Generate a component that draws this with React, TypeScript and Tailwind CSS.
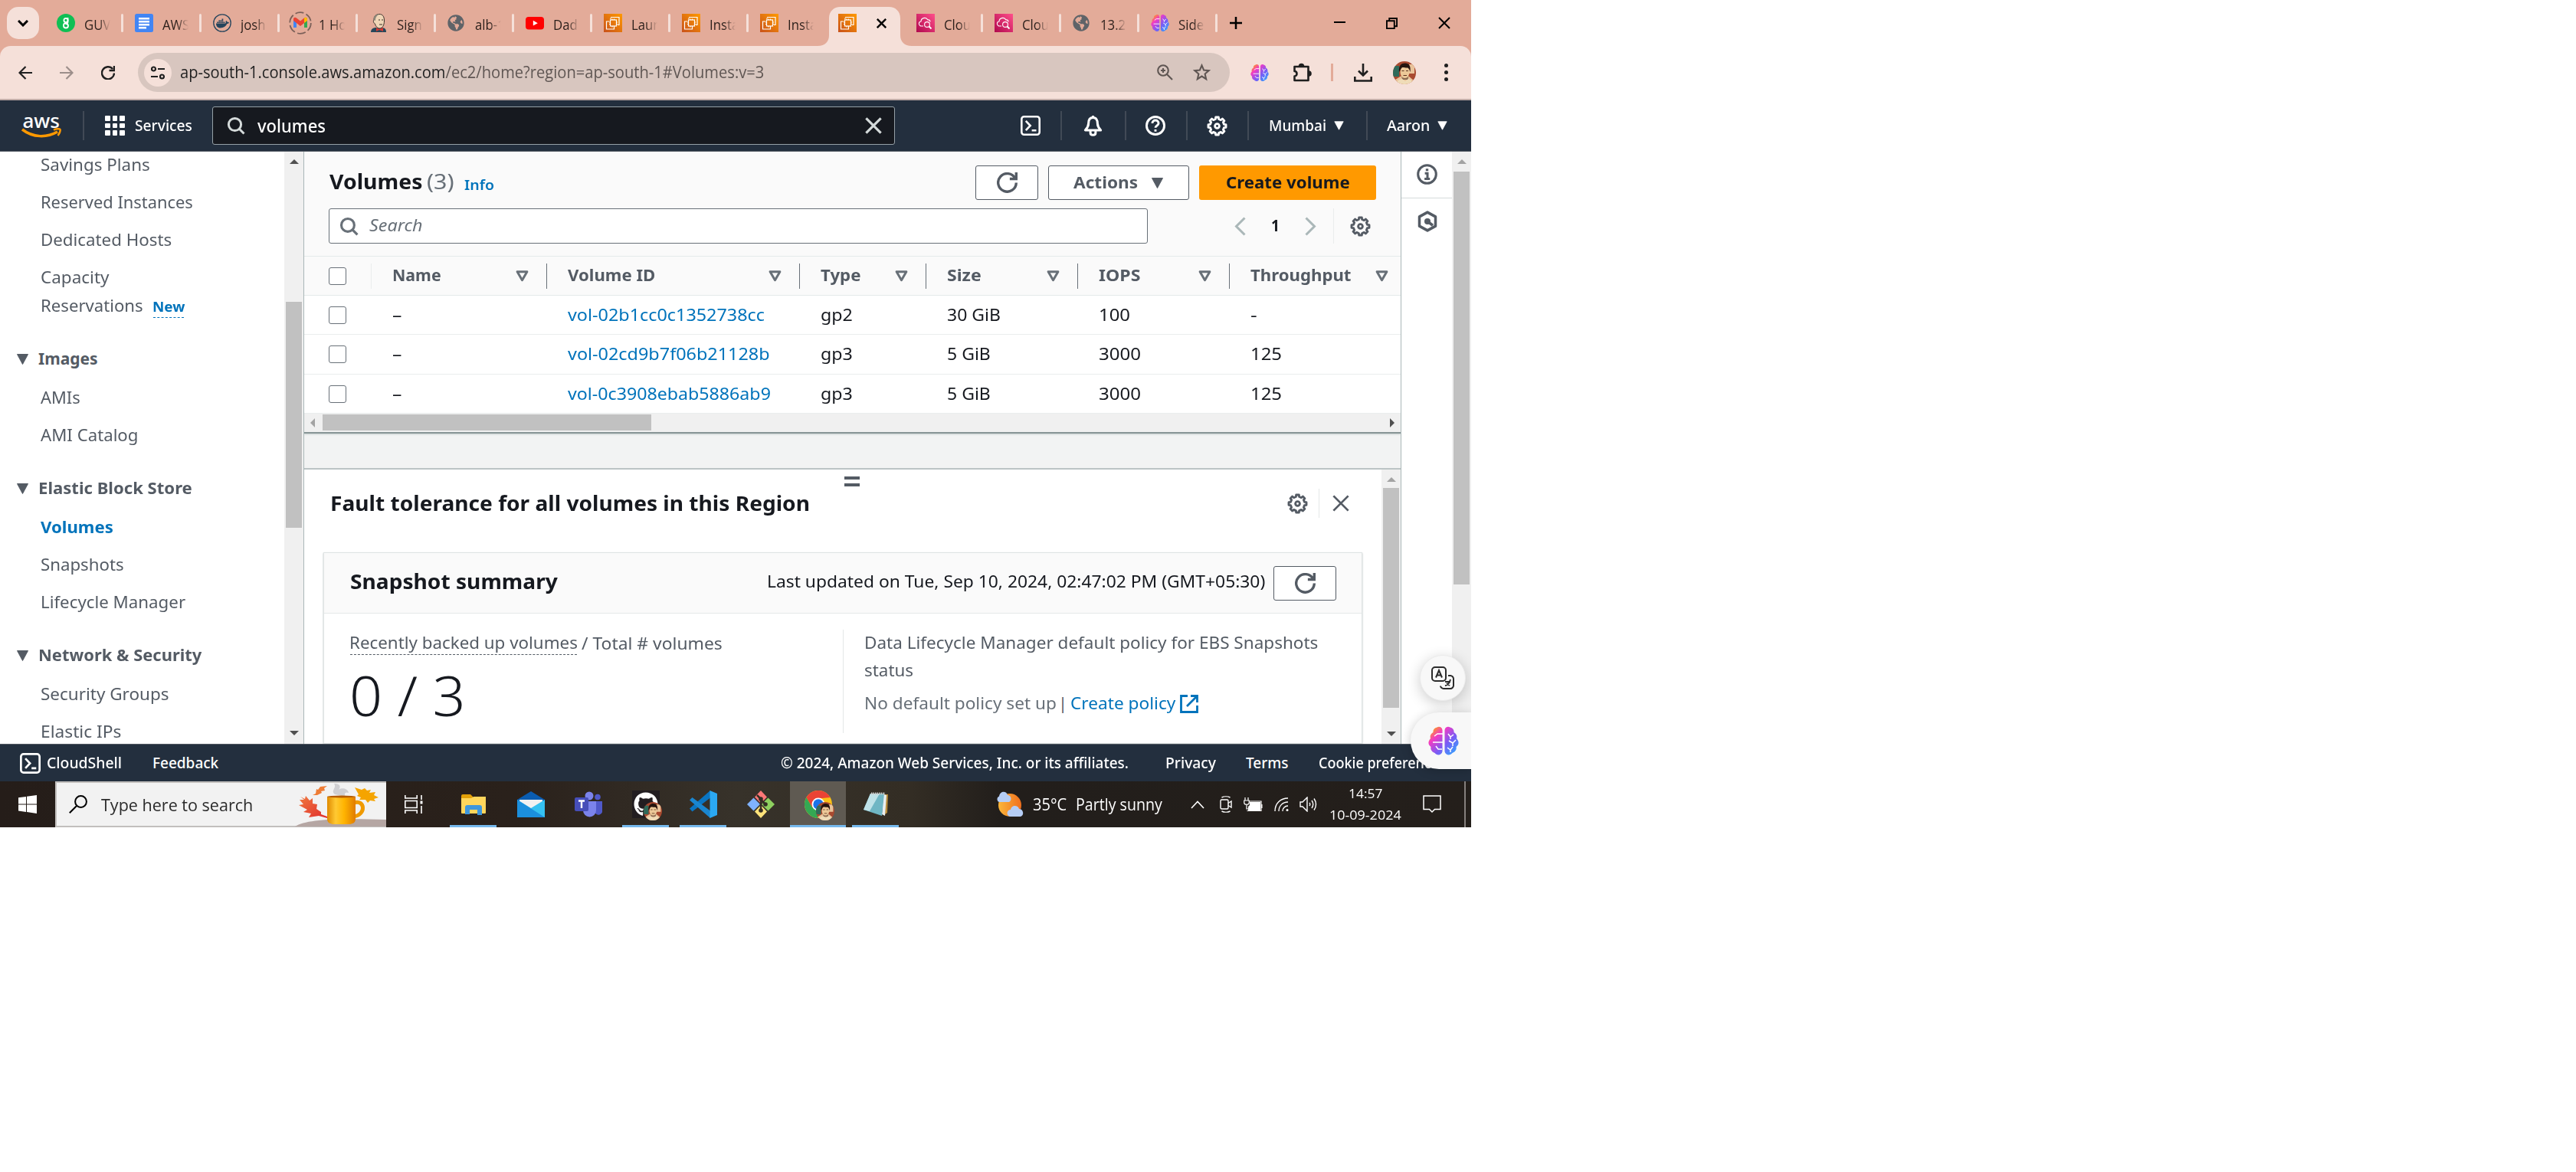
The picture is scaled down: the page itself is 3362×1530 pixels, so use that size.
import React, { useLayoutEffect, useRef, useState } from "react";
import { FaDocker, FaGithub, FaGlobeAmericas } from "react-icons/fa";

/* Text squeezed or stretched to an exact width. */
function Fit({ w, className = "", children }: { w: number; className?: string; children: React.ReactNode }) {
  const ref = useRef<HTMLSpanElement>(null);
  const [scale, setScale] = useState(1);
  useLayoutEffect(() => {
    if (ref.current) setScale((w + 2) / ref.current.offsetWidth);
  }, [w]);
  return (
    <span className={"inline-block shrink-0 whitespace-nowrap " + className} style={{ width: w }}>
      <span ref={ref} className="-ml-px inline-block origin-left whitespace-nowrap" style={{ transform: `scaleX(${scale})` }}>
        {children}
      </span>
    </span>
  );
}

type IconProps = { className?: string };

function Stroke({ className = "", children, w = 2, box = "0 0 16 16" }: IconProps & { children: React.ReactNode; w?: number; box?: string }) {
  return (
    <svg viewBox={box} fill="none" stroke="currentColor" strokeWidth={w} className={"shrink-0 " + className}>
      {children}
    </svg>
  );
}

function gearPath() {
  const pts: string[] = [];
  const n = 8;
  for (let i = 0; i < n; i++) {
    const offs: [number, number][] = [[-0.3, 5.5], [-0.2, 6.9], [0.2, 6.9], [0.3, 5.5]];
    offs.forEach(([o, r]) => {
      const a = ((i + o) / n) * Math.PI * 2 - Math.PI / 2;
      pts.push(`${(8 + r * Math.cos(a)).toFixed(2)} ${(8 + r * Math.sin(a)).toFixed(2)}`);
    });
  }
  return "M" + pts.join("L") + "Z";
}
const GEAR = gearPath();

const Gear = ({ className = "" }: IconProps) => (
  <Stroke className={className} w={1.7}>
    <path d={GEAR} strokeLinejoin="round" />
    <circle cx="8" cy="8" r="1.7" />
  </Stroke>
);
const Refresh = ({ className = "" }: IconProps) => (
  <Stroke className={className}>
    <path d="M10 5h5V0M15 8a7 7 0 1 1-.8-3.3" />
  </Stroke>
);
const Magnifier = ({ className = "" }: IconProps) => (
  <Stroke className={className}>
    <circle cx="7" cy="7" r="5.4" />
    <path d="m11 11 4 4" />
  </Stroke>
);
const Shell = ({ className = "" }: IconProps) => (
  <Stroke className={className} w={1.6}>
    <rect x="0.8" y="0.8" width="14.4" height="14.4" rx="2" />
    <path d="m4.2 4.2 3.6 3.8-3.6 3.8M9 11.8h3.6" />
  </Stroke>
);
const Cross = ({ className = "", w = 2 }: IconProps & { w?: number }) => (
  <Stroke className={className} w={w}>
    <path d="m1 1 14 14M15 1 1 15" />
  </Stroke>
);
const Down = ({ className = "" }: IconProps) => (
  <svg viewBox="0 0 16 14" className={"shrink-0 " + className}>
    <path d="M1 .5h14L8 13.500Z" fill="currentColor" stroke="currentColor" strokeLinejoin="round" />
  </svg>
);
const Sort = ({ className = "" }: IconProps) => (
  <svg viewBox="0 0 16 14" className={"shrink-0 " + className}>
    <path d="M2 1.500h12L8 12Z" fill="none" stroke="currentColor" strokeWidth="2.800" strokeLinejoin="round" />
  </svg>
);
const Chevron = ({ className = "", flip = false }: IconProps & { flip?: boolean }) => (
  <Stroke className={className} w={3} box="0 0 15 25">
    <path d={flip ? "M1.500 1.500 12.500 12.500 1.500 23.500" : "M13.500 1.500 2.500 12.500 13.500 23.500"} />
  </Stroke>
);
const Brain = ({ className = "", id }: IconProps & { id: string }) => (
  <svg viewBox="0 0 40 40" className={"shrink-0 " + className}>
    <defs>
      <linearGradient id={id} x1="0" y1="0" x2="1" y2="1">
        <stop offset="0.1" stopColor="#ff9a1f" />
        <stop offset="0.3" stopColor="#f23bc4" />
        <stop offset="0.6" stopColor="#7a5cf5" />
        <stop offset="1" stopColor="#25b4ff" />
      </linearGradient>
    </defs>
    <g fill={`url(#${id})`}>
      <path d="M18.500 6C18 2 14 1 11.500 2.500 8 3 6 6 6.500 9 3 11 2 14 3 17-.5 21-.5 25 3.500 28c-1 4 2 7 5 8 3 4 9 3 10-2ZM21.500 6C22 2 26 1 28.500 2.500 32 3 34 6 33.500 9 37 11 38 14 37 17c3.500 4 3.500 8-.5 11 1 4-2 7-5 8-3 4-9 3-10-2Z" />
    </g>
    <g stroke="#fff" strokeWidth="1.500" fill="none">
      <path d="M19 11h-7l-4 3M19 22H6M18 31h-5l-3-4M26 11l3 4 4-3M29 15v3M27 20l5 3 4-4M32 23v4M25 29l4 3 3-4M29 32v3" />
    </g>
  </svg>
);
const AwsTile = ({ id }: { id: string }) => (
  <svg viewBox="0 0 24 24" className="size-6 shrink-0">
    <defs>
      <linearGradient id={id} x1="0" y1="1" x2="1" y2="0">
        <stop offset="0" stopColor="#c8511b" />
        <stop offset="1" stopColor="#f90" />
      </linearGradient>
    </defs>
    <path fill={`url(#${id})`} d="M0 0h24v24H0z" />
    <g fill="none" stroke="#fff" strokeWidth="1.200">
      <rect x="8.500" y="8" width="8" height="8" />
      <path d="M9 7V5.500M9 4.500h11v10h-2M7 10H3.500v10h10v-3M11 6.500V8M13.500 6.500V8M11 16v1.500M13.500 16v1.500M7 11h1.500M7 13.500h1.500M16.500 11H18M16.500 13.500H18" />
    </g>
  </svg>
);
const CloudTile = ({ id }: { id: string }) => (
  <svg viewBox="0 0 24 24" className="size-6 shrink-0">
    <defs>
      <linearGradient id={id} x1="0" y1="1" x2="1" y2="0">
        <stop offset="0" stopColor="#b0084d" />
        <stop offset="1" stopColor="#ff4f8b" />
      </linearGradient>
    </defs>
    <path fill={`url(#${id})`} d="M0 0h24v24H0z" />
    <g fill="none" stroke="#fff" strokeWidth="1.100">
      <path d="M9 16H7a3 3 0 0 1-1-6c0-4 6-7 9-2 2-.5 3 1 3 2.500" />
      <circle cx="14" cy="14" r="3.400" />
      <path d="m16.500 16.500 3 3" strokeWidth="1.800" />
    </g>
  </svg>
);
const Face = ({ className = "" }: IconProps) => (
  <svg viewBox="0 0 30 30" className={"shrink-0 rounded-full " + className}>
    <path fill="#a8492f" d="M0 0h30v30H0z" />
    <path fill="#2f6a5a" d="M0 6h8v14H0z" />
    <path fill="#e9c39a" d="M21 4h7v12h-7zM3 24l8-5h9l7 6v5H3Z" />
    <ellipse cx="15.500" cy="14" rx="6" ry="8" fill="#ecc898" />
    <path fill="#26150f" d="M8 14C7 5 11 2.500 16 2.500S23.500 6 22.500 14c-1-3-1.500-5.500-4-5.500-3 0-6-1-7 0-1.500 1-1.500 3-3.500 5.500Z" />
    <path fill="none" stroke="#5b3522" d="M11.500 12.500h3M17 12.500h3M13.500 18.500h4.500" />
    <path fill="#3a2018" d="M10.500 19c2 4 8 4 10 0l-1 5h-7Z" opacity=".55" />
    <path fill="#efdcb8" d="M4 30c1-5 4-6 8-7l4 3 4-3c4 1 5 3 6 7Z" />
  </svg>
);

const favicons: React.ReactNode[] = [
  <svg viewBox="0 0 24 24" className="size-6"><circle cx="12" cy="12" r="12" fill="#0fbf54" /><g fill="none" stroke="#fff" strokeWidth="1.800"><circle cx="12" cy="8.500" r="2.600" /><path d="M14.500 5v6c0 1-1 1.500-2.500 1.500-3 0-3 1-3 3a3 3 0 0 0 6 0c0-1.500-1-2.500-3-2.500" /></g></svg>,
  <svg viewBox="0 0 24 24" className="size-6"><rect width="24" height="24" rx="2.500" fill="#4285f4" /><path stroke="#fff" strokeWidth="2.600" d="M5 6.200h14M5 10.200h14M5 14.200h14M5 18.200h10" /></svg>,
  <svg viewBox="0 0 24 24" className="size-6"><circle cx="12" cy="12" r="11.200" fill="none" stroke="#25445c" strokeWidth="1.300" /><foreignObject x="3.500" y="3.500" width="17" height="17"><FaDocker size={17} color="#25445c" /></foreignObject></svg>,
  <svg viewBox="0 0 30 30" className="-m-[3px] size-[30px] shrink-0"><circle cx="15" cy="15" r="13.800" fill="none" stroke="#7b6059" strokeWidth="1.800" strokeDasharray="11 3.500" /><path fill="#4285f4" d="M6 10h4v11H6z" /><path fill="#34a853" d="M20 10h4v11h-4z" /><path fill="#ea4335" d="M6 10c0-2 2-3 4-1.500l5 4 5-4c2-1.500 4-.5 4 1.500v2l-9 7-9-7Z" /><path fill="#fbbc04" d="M20 8.500c2-1.500 4-.5 4 1.500v2l-4 3Z" /></svg>,
  <svg viewBox="0 0 24 24" className="size-6"><path fill="#25475a" d="M2 24c0-4 3-6 7-6h7c4 0 6 2 6 6Z" /><path fill="#f0d6b7" stroke="#3a3029" d="M6 8c0-5 3-7.500 7-7.500S19.500 3 19.500 9c0 7-3 10-6 10S8 16 7.500 13C5 12 5 9 6 8Z" /><path fill="#8c8578" d="M5.500 8C5 3 8 .5 13 .5 9 3 8 5 8 9Z" /><path fill="#d33833" d="m9 18 4 2 5-2v5l-5-2-4 2Z" /><path stroke="#3a3029" d="M12 8h2M16 8h2M13 14h4" /></svg>,
  <FaGlobeAmericas size={22} color="#5f6368" />,
  <svg viewBox="0 0 24 24" className="size-6"><rect y="4" width="24" height="16.500" rx="4" fill="red" /><path fill="#fff" d="m9.800 8.800 6 3.400-6 3.400Z" /></svg>,
  <AwsTile id="a1" />,
  <AwsTile id="a2" />,
  <AwsTile id="a3" />,
  <AwsTile id="a4" />,
  <CloudTile id="c1" />,
  <CloudTile id="c2" />,
  <FaGlobeAmericas size={22} color="#5f6368" />,
  <Brain id="b1" className="size-6" />,
];
const tabTitles = ["GUVI", "AWS ", "josh", "1 Ho", "Sign", "alb-1", "Dad", "Laun", "Insta", "Insta", "", "Clou", "Clou", "13.2", "Side"];

function TabStrip() {
  return (
    <div className="flex h-[60px] bg-[#e3ab99]">
      <div className="mt-[9px] ml-[9px] flex size-[42px] shrink-0 items-center justify-center rounded-[15px] bg-[#f5e0d9]">
        <Stroke className="h-[9px] w-[14px]" w={3} box="0 0 14 9"><path d="m1 1 6 6 6-6" /></Stroke>
      </div>
      <div className="ml-[10px] flex shrink-0">
        {tabTitles.map((t, i) =>
          i === 10 ? (
            <div key={i} className="relative h-[60px] w-[102px] shrink-0">
              <svg viewBox="0 0 123 51" className="absolute top-[9px] -left-[14px] h-[51px] w-[123px]">
                <path fill="#f5e0d9" d="M0 51c10 0 15-6 15-14V15C15 6 21 0 30 0h63c9 0 15 6 15 15v22c0 8 5 14 15 14Z" />
              </svg>
              <div className="relative flex h-[60px] items-center pl-[13px]">
                {favicons[i]}
                <Cross className="ml-[26px] size-[13px]" w={3} />
              </div>
            </div>
          ) : (
            <div key={i} className="flex h-[60px] w-[102px] shrink-0 items-center pl-[13px]">
              <span className="flex size-6 shrink-0 items-center">{favicons[i]}</span>
              <span className="mt-1 ml-3 w-[34px] shrink-0 overflow-hidden text-[18px] whitespace-pre text-[#2a1e1a] [mask-image:linear-gradient(to_right,black_55%,transparent)]">
                <span className="inline-block origin-left scale-x-[.93]">{t}</span>
              </span>
              {i !== 9 && <span className="ml-[14px] h-6 w-[3px] shrink-0 rounded-full bg-[#f5e0d9]" />}
            </div>
          )
        )}
      </div>
      <div className="flex h-[60px] items-center text-black">
        <Stroke className="ml-[14px] size-4" w={2.5}><path d="M8 0v16M0 8h16" /></Stroke>
        <span className="mb-[2px] ml-[120px] h-[2px] w-[15px] bg-black" />
        <Stroke className="ml-[53px] size-[15px]" w={2}><path d="M1 4.500h10.500V15H1zM4.500 4V1H15v11h-3" /></Stroke>
        <Cross className="ml-[53px] size-[16px]" w={2} />
      </div>
    </div>
  );
}

function Toolbar() {
  return (
    <div className="h-[71px] border-b-2 border-[#c1ada8] bg-[#e3ab99]">
      <div className="flex h-[69px] items-center rounded-t-[14px] bg-[#f5e0d9] text-[#1f1f1f]">
        <Stroke className="ml-[24px] size-[18px]" w={2.200} box="0 0 18 18"><path d="M18 9H2M9.500 1 1.500 9l8 8" /></Stroke>
        <Stroke className="ml-[36px] size-[18px] text-[#9c8e8a]" w={2.200} box="0 0 18 18"><path d="M0 9h16M8.500 1l8 8-8 8" /></Stroke>
        <Stroke className="ml-[36px] size-[18px]" w={2.400} box="0 0 18 18"><path d="M17 9.500A8 8 0 1 1 15 4M17 0v6h-6.500" /></Stroke>
        <div className="ml-[30px] flex h-[51px] w-[1425px] shrink-0 items-center rounded-full bg-[#d8c6bf]">
          <div className="ml-2 flex size-9 shrink-0 items-center justify-center rounded-full bg-[#f5e0d9]">
            <Stroke className="size-[18px]" w={2.200} box="0 0 18 18"><circle cx="3.500" cy="4" r="2.500" /><path d="M9 4h9M0 14h9" /><circle cx="14.500" cy="14" r="2.500" /></Stroke>
          </div>
          <Fit w={760} className="ml-[12px] text-[21px] text-[#1f1f1f]">
            ap-south-1.console.aws.amazon.com<span className="text-[#5f5653]">/ec2/home?region=ap-south-1#Volumes:v=3</span>
          </Fit>
          <div className="ml-[514px] flex items-center text-[#5f5653]">
            <Stroke className="size-[21px]" w={2.100} box="0 0 21 21"><circle cx="8" cy="8" r="6.800" /><path d="m13 13 7 7M8 5v6M5 8h6" /></Stroke>
            <Stroke className="ml-[26px] size-[23px]" w={2.200} box="0 0 24 24"><path d="m12 2.500 2.700 6.400 6.800.6-5.200 4.600 1.600 6.900-5.900-3.700L6.100 21l1.600-6.900-5.200-4.600 6.800-.6Z" /></Stroke>
          </div>
        </div>
        <Brain id="b2" className="ml-[27px] size-6" />
        <Stroke className="ml-[31px] size-[25px]" w={2.600} box="0 0 25 25"><path d="M2.500 5h18v18h-18v-5.500c4 0 4-6.500 0-6.500Z" strokeLinejoin="round" /><path d="M9 4.500a2.500 2.500 0 0 1 5 0ZM21 11.500a2.500 2.500 0 0 1 0 5Z" fill="currentColor" /></Stroke>
        <span className="ml-[25px] h-[23px] w-[3px] shrink-0 bg-[#e3ab99]" />
        <Stroke className="ml-[27px] size-6" w={2.600} box="0 0 24 24"><path d="M12 0v15M6 9.500l6 6 6-6M1.300 17v5.500h21.400V17" /></Stroke>
        <Face className="ml-[27px] size-[30px]" />
        <div className="ml-[37px] flex flex-col gap-[4px]">
          <span className="size-[5px] rounded-full bg-[#1f1f1f]" />
          <span className="size-[5px] rounded-full bg-[#1f1f1f]" />
          <span className="size-[5px] rounded-full bg-[#1f1f1f]" />
        </div>
      </div>
    </div>
  );
}

const Bar = ({ className = "" }: IconProps) => <span className={"h-[38px] w-[2px] shrink-0 bg-[#414a56] " + className} />;

function ConsoleHeader() {
  return (
    <div className="flex h-[67px] items-center border-b border-[#545b64] bg-[#232f3e] text-white">
      <div className="ml-[28px] flex w-[52px] shrink-0 flex-col items-center">
        <Fit w={47} className="text-[26px] leading-[21px] font-medium">aws</Fit>
        <svg viewBox="0 0 52 14" className="-mt-px h-[14px] w-[52px]">
          <path d="M1 2c14 11 32 11 46 3" fill="none" stroke="#f90" strokeWidth="3.500" />
          <path d="M42 2.500c4-1.500 8-1.500 8.500-.5s-.5 5-3 8" fill="none" stroke="#f90" strokeWidth="2.500" />
        </svg>
      </div>
      <Bar className="ml-[28px]" />
      <div className="ml-[27px] grid size-[26px] shrink-0 grid-cols-3 gap-[3px]">
        {Array.from({ length: 9 }, (_, i) => <span key={i} className="rounded-[1px] bg-white" />)}
      </div>
      <Fit w={73} className="ml-[14px] text-[20px] font-medium">Services</Fit>
      <div className="ml-[27px] flex h-[50px] w-[891px] shrink-0 items-center rounded-[3px] border border-[#95a0a6] bg-[#16191f]">
        <Magnifier className="ml-[18px] size-[24px] text-[#d5dbdb]" />
        <Fit w={87} className="ml-[17px] text-[23px] font-medium">volumes</Fit>
        <Cross className="ml-[705px] size-[22px] text-[#d5dbdb]" w={2.300} />
      </div>
      <Shell className="ml-[164px] size-[26px]" />
      <Bar className="ml-[26px]" />
      <Stroke className="ml-[27px] size-[27px]" w={1.800}>
        <path d="M8 1.500C5.500 1.500 4.500 3.500 4.500 6c0 2.500-1 3.500-2.500 5.200h12C12.500 9.500 11.500 8.500 11.500 6c0-2.500-1-4.500-3.500-4.500ZM8 0v2M6 11.500v1.800c0 2.200 4 2.200 4 0v-1.800" strokeLinejoin="round" />
      </Stroke>
      <Bar className="ml-[28px]" />
      <Stroke className="ml-[25px] size-[26px]" w={1.800}>
        <circle cx="8" cy="8" r="7.100" />
        <path d="M5.500 6.200c0-3.300 5-3.300 5 0 0 1.800-2.500 1.800-2.500 3.500M8 11v1.700" />
      </Stroke>
      <Bar className="ml-[27px]" />
      <Gear className="ml-[25px] size-[27px]" />
      <Bar className="ml-[26px]" />
      <Fit w={73} className="ml-[27px] text-[20px] font-medium">Mumbai</Fit>
      <Down className="ml-[11px] h-[12px] w-[13px]" />
      <Bar className="ml-[29px]" />
      <Fit w={54} className="ml-[26px] text-[20px] font-medium">Aaron</Fit>
      <Down className="ml-[11px] h-[12px] w-[13px]" />
    </div>
  );
}

const Item = ({ w, children, active = false }: { w: number; children: string; active?: boolean }) => (
  <li className={"flex h-[49px] items-center pl-[54px] " + (active ? "font-bold text-[#0073bb]" : "")}>
    <Fit w={w}>{children}</Fit>
  </li>
);
const Section = ({ w, children }: { w: number; children: string }) => (
  <li className="flex h-[71px] items-center pt-[18px] pl-[21px] font-bold">
    <Down className="h-[14px] w-[17px]" />
    <Fit w={w} className="ml-[13px]">{children}</Fit>
  </li>
);

const Tri = ({ d, className = "fill-[#505050]" }: { d: string; className?: string }) => (
  <svg viewBox="0 0 12 12" className={"size-3 shrink-0 " + className}><path d={d} /></svg>
);
const UP = "M0 9 6 3l6 6Z";
const DOWN = "M0 3h12L6 9Z";

function Sidebar() {
  return (
    <>
      <ul className="-mt-[7px] w-[371px] shrink-0 overflow-hidden bg-white text-[21px] text-[#545b64]">
        <Item w={141}>Savings Plans</Item>
        <Item w={197}>Reserved Instances</Item>
        <Item w={169}>Dedicated Hosts</Item>
        <li className="flex h-[86px] flex-col pt-[6px] pl-[54px] leading-[37px]">
          <Fit w={88}>Capacity</Fit>
          <div className="flex items-center">
            <Fit w={132}>Reservations</Fit>
            <Fit w={40} className="mt-px ml-[14px] border-b border-dashed border-[#0073bb] text-[18px] leading-[28px] font-bold text-[#0073bb]">New</Fit>
          </div>
        </li>
        <Section w={76}>Images</Section>
        <Item w={50}>AMIs</Item>
        <Item w={126}>AMI Catalog</Item>
        <Section w={199}>Elastic Block Store</Section>
        <Item w={93} active>Volumes</Item>
        <Item w={107}>Snapshots</Item>
        <Item w={187}>Lifecycle Manager</Item>
        <Section w={211}>Network &amp; Security</Section>
        <Item w={165}>Security Groups</Item>
        <Item w={103}>Elastic IPs</Item>
      </ul>
      <div className="flex w-[25px] shrink-0 flex-col items-center bg-[#f0f0f0]">
        <Tri d={UP} className="mt-[7px] fill-[#505050]" />
        <div className="mt-[177px] h-[295px] w-[21px] bg-[#c1c1c1]" />
        <Tri d={DOWN} className="mt-[262px] fill-[#505050]" />
      </div>
    </>
  );
}

const Check = () => <span className="size-[23px] shrink-0 rounded-[3px] border-[1.500px] border-[#687078] bg-white" />;
const HBar = ({ light = false }: { light?: boolean }) => (
  <span className={light ? "h-[33px] w-px shrink-0 bg-[#eaeded]" : "h-[33px] w-px shrink-0 bg-[#687078]"} />
);

function HeadCell({ w, width, children, gap }: { w: number; width: string; children: string; gap: string }) {
  return (
    <div className={"flex shrink-0 items-center pl-[28px] " + width}>
      <Fit w={w} className="font-bold text-[#545b64]">{children}</Fit>
      <Sort className={"h-[15px] w-[17px] text-[#687078] " + gap} />
    </div>
  );
}

const rows = [
  { id: "vol-02b1cc0c1352738cc", iw: 255, t: "gp2", s: "30 GiB", sw: 68, i: "100", iow: 39, th: "-", tw: 7 },
  { id: "vol-02cd9b7f06b21128b", iw: 262, t: "gp3", s: "5 GiB", sw: 55, i: "3000", iow: 53, th: "125", tw: 39 },
  { id: "vol-0c3908ebab5886ab9", iw: 263, t: "gp3", s: "5 GiB", sw: 55, i: "3000", iow: 53, th: "125", tw: 39 },
];

function VolumesTable() {
  return (
    <div className="border-b-2 border-[#879596] bg-[#fafafa] text-[21px] shadow-[0_1px_2px_#c5cccc]">
      <div className="flex h-[74px] items-center pt-[7px]">
        <Fit w={119} className="-mt-[2px] ml-[34px] text-[27px] font-bold text-[#16191f]">Volumes</Fit>
        <Fit w={34} className="-mt-[2px] ml-[8px] text-[27px] text-[#687078]">(3)</Fit>
        <Fit w={37} className="mt-[5px] ml-[15px] text-[18px] font-semibold text-[#0073bb]">Info</Fit>
        <div className="ml-[629px] flex h-[45px] w-[82px] shrink-0 items-center justify-center rounded-[3px] border-[1.500px] border-[#545b64] bg-white text-[#545b64]">
          <Refresh className="size-[27px]" />
        </div>
        <div className="ml-[13px] flex h-[45px] w-[184px] shrink-0 items-center rounded-[3px] border-[1.500px] border-[#545b64] bg-white pl-[33px] text-[#545b64]">
          <Fit w={82} className="font-bold">Actions</Fit>
          <Down className="ml-[18px] h-[14px] w-[17px]" />
        </div>
        <div className="ml-[13px] flex h-[45px] w-[231px] shrink-0 items-center justify-center rounded-[3px] bg-[#f90] text-[#16191f]">
          <Fit w={160} className="font-bold">Create volume</Fit>
        </div>
      </div>
      <div className="flex h-[46px] items-center">
        <div className="ml-[32px] flex h-[46px] w-[1069px] shrink-0 items-center rounded-[3px] border-[1.500px] border-[#687078] bg-white text-[#687078]">
          <Magnifier className="ml-[13px] size-[25px]" />
          <Fit w={68} className="ml-[15px] italic">Search</Fit>
        </div>
        <Chevron className="ml-[113px] h-[25px] w-[15px] text-[#aab7b8]" />
        <Fit w={9} className="ml-[34px] font-bold text-[#16191f]">1</Fit>
        <Chevron flip className="ml-[34px] h-[25px] w-[15px] text-[#aab7b8]" />
        <span className="ml-[22px] h-[46px] w-px shrink-0 bg-[#eaeded]" />
        <Gear className="ml-[21px] size-[27px] text-[#545b64]" />
      </div>
      <div className="mt-[16px] flex h-[52px] items-center border-y border-[#e4eaea]">
        <div className="flex w-[87px] shrink-0 items-center pl-[32px]"><Check /></div>
        <HBar light />
        <HeadCell w={62} width="w-[228px]" gap="ml-[98px]">Name</HeadCell>
        <HBar />
        <HeadCell w={112} width="w-[329px]" gap="ml-[149px]">Volume ID</HeadCell>
        <HBar />
        <HeadCell w={51} width="w-[164px]" gap="ml-[45px]">Type</HeadCell>
        <HBar />
        <HeadCell w={43} width="w-[197px]" gap="ml-[86px]">Size</HeadCell>
        <HBar />
        <HeadCell w={52} width="w-[197px]" gap="ml-[77px]">IOPS</HeadCell>
        <HBar />
        <HeadCell w={129} width="w-[224px]" gap="ml-[33px]">Throughput</HeadCell>
      </div>
      {rows.map((r) => (
        <div key={r.id} className="flex h-[51.330px] items-center border-b border-[#eaeded] bg-white pt-px text-[#16191f]">
          <div className="w-[88px] shrink-0 pl-[32px]"><div className="flex"><Check /></div></div>
          <div className="w-[229px] shrink-0 pl-[28px]"><Fit w={11}>–</Fit></div>
          <div className="w-[330px] shrink-0 pl-[28px] text-[#0073bb]"><Fit w={r.iw}>{r.id}</Fit></div>
          <div className="w-[165px] shrink-0 pl-[28px]"><Fit w={40}>{r.t}</Fit></div>
          <div className="w-[198px] shrink-0 pl-[28px]"><Fit w={r.sw}>{r.s}</Fit></div>
          <div className="w-[198px] shrink-0 pl-[28px]"><Fit w={r.iow}>{r.i}</Fit></div>
          <div className="shrink-0 pl-[28px]"><Fit w={r.tw}>{r.th}</Fit></div>
        </div>
      ))}
      <div className="flex h-[24px] items-center bg-[#f0f0f0]">
        <Tri d="M9 0v12L3 6Z" className="ml-[5px] fill-[#a3a3a3]" />
        <div className="ml-[7px] h-[21px] w-[429px] bg-[#c1c1c1]" />
        <Tri d="M3 0v12l6-6Z" className="ml-[961px] fill-[#505050]" />
      </div>
    </div>
  );
}

function SplitPanel() {
  return (
    <div className="flex h-[360px] shrink-0 overflow-hidden border-t-2 border-[#bcc4c5] bg-white text-[21px]">
      <div className="flex w-[1405px] shrink-0 flex-col">
        <div className="ml-[705px] flex h-[22px] w-5 flex-col justify-end gap-[5px]">
          <span className="h-1 bg-[#545b64]" />
          <span className="h-1 bg-[#545b64]" />
        </div>
        <div className="flex h-[44px] items-center text-[#545b64]">
          <Fit w={624} className="ml-[35px] text-[27px] font-bold text-[#16191f]">Fault tolerance for all volumes in this Region</Fit>
          <Gear className="ml-[624px] size-[27px]" />
          <span className="ml-[14px] h-[38px] w-px shrink-0 bg-[#e4e8e8]" />
          <Cross className="ml-[17px] size-[22px]" />
        </div>
        <div className="mt-[42px] ml-[25px] flex w-[1356px] grow flex-col border border-[#dfe4e4] shadow-[0_1px_2px_#b9c0c0]">
          <div className="flex h-[79px] shrink-0 items-center border-b border-[#e4e8e8] bg-[#fafafa]">
            <Fit w={269} className="-mt-[3px] ml-[35px] text-[27px] font-bold text-[#16191f]">Snapshot summary</Fit>
            <Fit w={648} className="-mt-[2px] ml-[275px] text-[#16191f]">Last updated on Tue, Sep 10, 2024, 02:47:02 PM (GMT+05:30)</Fit>
            <div className="ml-[12px] flex h-[45px] w-[82px] shrink-0 items-center justify-center rounded-[3px] border-[1.500px] border-[#545b64] bg-white text-[#545b64]">
              <Refresh className="size-[27px]" />
            </div>
          </div>
          <div className="flex pt-[21px] text-[#545b64]">
            <div className="w-[677px] shrink-0 pl-[34px]">
              <div className="flex h-[36px] items-center">
                <Fit w={296} className="border-b border-dashed border-[#545b64] leading-[29px]">Recently backed up volumes</Fit>
                <Fit w={182} className="ml-[7px] leading-[30px]">/ Total # volumes</Fit>
              </div>
              <Fit w={150} className="mt-[11px] text-[72px] leading-[76px] font-light text-[#16191f]">0 / 3</Fit>
            </div>
            <div className="h-[135px] border-l border-[#e4e8e8] pl-[28px]">
              <div className="flex h-[36px] items-center"><Fit w={590}>Data Lifecycle Manager default policy for EBS Snapshots</Fit></div>
              <div className="flex h-[36px] items-center"><Fit w={62}>status</Fit></div>
              <div className="mt-[7px] flex h-[36px] items-center">
                <Fit w={249} className="text-[#687078]">No default policy set up</Fit>
                <span className="ml-[3px] w-[12px] text-center">|</span>
                <Fit w={135} className="ml-[5px] text-[#0073bb]">Create policy</Fit>
                <Stroke className="ml-[7px] size-[24px] text-[#0073bb]" w={2.800} box="0 0 24 24">
                  <path d="M10 1.500H1.500v21h21V14M14 1.500h8.500V10M22 2 9 15" />
                </Stroke>
              </div>
            </div>
          </div>
        </div>
      </div>
      <div className="ml-px flex w-[25px] shrink-0 flex-col items-center bg-[#f0f0f0]">
        <Tri d={UP} className="mt-[7px] fill-[#a3a3a3]" />
        <div className="mt-[5px] h-[287px] w-[21px] bg-[#c1c1c1]" />
        <Tri d={DOWN} className="mt-[28px] fill-[#505050]" />
      </div>
    </div>
  );
}

function RightRail() {
  return (
    <>
      <div className="flex w-[66px] shrink-0 flex-col items-center bg-white text-[#545b64]">
        <div className="flex h-[61px] w-full shrink-0 items-center justify-center border-b border-[#d5dbdb]">
          <Stroke className="mt-[-2px] ml-px size-[27px]" w={1.800}>
            <circle cx="8" cy="8" r="7" />
            <path d="M6.300 7.300h2v4.300M6 11.500h4.200M7 4.600h2" />
          </Stroke>
        </div>
        <Stroke className="mt-[16px] ml-px size-[28px]" w={2}>
          <path d="M8 1.200 14 4.500v7L8 14.800 2 11.500v-7Z" strokeLinejoin="round" />
          <circle cx="8" cy="8" r="1.300" fill="currentColor" />
          <path d="m8 8 4 3" />
        </Stroke>
      </div>
      <div className="flex w-[25px] shrink-0 flex-col items-center bg-[#f0f0f0]">
        <Tri d={UP} className="mt-[7px] fill-[#a3a3a3]" />
        <div className="mt-[7px] h-[539px] w-[21px] bg-[#c1c1c1]" />
      </div>
    </>
  );
}

function Footer() {
  return (
    <div className="flex h-[49px] shrink-0 items-center overflow-hidden border-t border-[#545b64] bg-[#232f3e] text-[19px] font-medium text-white">
      <Shell className="ml-[26px] size-[27px]" />
      <Fit w={96} className="ml-[9px]">CloudShell</Fit>
      <Fit w={84} className="ml-[42px]">Feedback</Fit>
      <Fit w={452} className="ml-[736px]">© 2024, Amazon Web Services, Inc. or its affiliates.</Fit>
      <Fit w={64} className="ml-[50px]">Privacy</Fit>
      <Fit w={54} className="ml-[41px]">Terms</Fit>
      <Fit w={164} className="ml-[41px]">Cookie preferences</Fit>
    </div>
  );
}

function TaskButton({ children, on = false, hot = false }: { children: React.ReactNode; on?: boolean; hot?: boolean }) {
  return (
    <div className={"flex h-[60px] w-[73px] shrink-0 flex-col items-center " + (hot ? "bg-[#5f5a52]" : "")}>
      <div className="flex h-[57px] shrink-0 items-center pt-[3px]">{children}</div>
      {on && <span className={"h-[3px] bg-[#76b9ed] " + (hot ? "w-[73px]" : "w-[61px]")} />}
    </div>
  );
}

function Taskbar() {
  return (
    <div className="flex h-[60px] shrink-0 items-center bg-[linear-gradient(to_right,#251d19_0%,#2a211b_35%,#37322a_50%,#332d24_62%,#221e1b_68%,#241f1b_100%)] text-white">
      <svg viewBox="0 0 24 24" className="ml-6 size-6 shrink-0 fill-white"><path d="M0 3.300 10 2v9.400H0zM11 1.800 24 0v11.400H11zM0 12.400h10v9.500L0 20.500zM11 12.400h13V24l-13-1.900z" /></svg>
      <div className="ml-6 flex h-[60px] w-[432px] shrink-0 items-center border-2 border-r-0 border-[#c2bfbd] bg-[#f2f2f2] text-[#2b2b2b]">
        <Stroke className="ml-4 size-6 text-black" w={2} box="0 0 24 24"><circle cx="15.500" cy="8.500" r="7.400" /><path d="M10.500 13.500.8 23.200" /></Stroke>
        <Fit w={196} className="mt-[3px] ml-[19px] text-[21px]">Type here to search</Fit>
        <svg viewBox="0 0 119 58" className="ml-[56px] h-[58px] w-[119px] shrink-0">
          <defs>
            <linearGradient id="mug"><stop offset="0" stopColor="#e08a00" /><stop offset=".3" stopColor="#ffc933" /><stop offset=".6" stopColor="#ffb400" /><stop offset="1" stopColor="#e07b00" /></linearGradient>
            <linearGradient id="leaf" x1="0" y1="0" x2="1" y2="1"><stop offset="0" stopColor="#f07a3f" /><stop offset="1" stopColor="#e02d2d" /></linearGradient>
          </defs>
          <path fill="#b5a6a3" d="M0 58c14-9 50-11 119-9v9Z" />
          <path d="M52 16c-6-5 3-8-1-14 10 0 8 6 6 8 3-3 12-2 13 4-5-2-6 2-4 5Z" fill="#cfcfd2" />
          <path d="M77 27c14-5 17 16-1 18" fill="none" stroke="#f09a00" strokeWidth="5" />
          <path d="M42 19h37v29c0 5-4 7-9 7H51c-5 0-9-2-9-7Z" fill="url(#mug)" />
          <ellipse cx="60.500" cy="19" rx="18.500" ry="1.500" fill="#b65c00" />
          <path fill="url(#leaf)" d="m7 19 6 3 1-4 5 6 4-3 0 7 6 1-1 6 6 4 0 3 8 3v2l-11-3-13 2 3-5-10-2 5-3-11-6 6-1-5-6h6Z" />
          <path fill="#ee7c35" d="m42 5-9 1-3 4-2-1-1 6-4 2 6 0 6-3-1-2 5-1-1-3Z" />
          <path fill="#f5a400" d="M78 7l9 3 4-2 3 3 5-1-2 4 8-1-2 4 6 3-6 2 2 3-7-1-3 3-3-4-8 0 2-3-5-2 2-2Z" />
        </svg>
      </div>
      <Stroke className="ml-6 size-6" w={1.600} box="0 0 24 24"><path d="M.8 0v4h15.400V0M.8 7.500h15.400v9H.8zM.8 24v-4h15.400v4M22 0v6M22 14v10" /><path d="M20.500 7.500h3v4h-3z" fill="currentColor" stroke="none" /></Stroke>
      <div className="ml-[29px] flex shrink-0 gap-[2px]">
        <TaskButton on>
          <svg viewBox="0 0 32 28" className="h-[28px] w-[32px]"><path fill="#e3a008" d="M0 3q0-2 2-2h10l3 3v4H0z" /><path fill="#ffd65c" d="M0 6h13l3-2h16v21q0 1-1 1H1q-1 0-1-1Z" /><path fill="#3e97dd" d="M5 27V18q0-3 3-3h16q3 0 3 3v10h-6v-7H11v6Z" /></svg>
        </TaskButton>
        <TaskButton>
          <svg viewBox="0 0 36 34" className="h-[34px] w-[36px]"><path fill="#0a5cb0" d="M0 11 18 0l18 11v4H0Z" /><path fill="#f1f1f1" d="M3 11h30v8l-15 8L3 19Z" /><path fill="#35c1f1" d="M0 11l18 11 18-11v23H0Z" /><path fill="#1b8fdd" d="M0 11l36 23H0Z" /></svg>
        </TaskButton>
        <TaskButton>
          <svg viewBox="0 0 36 34" className="h-[34px] w-[36px]"><circle cx="19" cy="6" r="5.500" fill="#7b83eb" /><circle cx="30" cy="7.500" r="3.800" fill="#5059c9" /><path fill="#5059c9" d="M24 13h12v11a5 5 0 0 1-10 3Z" /><path fill="#7b83eb" d="M11 13h17v12a8.500 8.500 0 0 1-17 0Z" /><rect y="8" width="18" height="18" rx="2" fill="#464eb8" /><path stroke="#fff" strokeWidth="2.400" d="M5 12.500h8M9 12.500V22" /></svg>
        </TaskButton>
        <TaskButton on>
          <div className="relative flex size-9 items-center justify-center bg-[#221d20]">
            <FaGithub size={32} color="#fff" />
            <Face className="absolute top-[15px] left-[15px] size-6" />
          </div>
        </TaskButton>
        <TaskButton on>
          <svg viewBox="0 0 36 36" className="size-9"><path fill="#0a75c2" d="M27 0 0 23.500l3.500 4L29 8Z" /><path fill="#1a86d0" d="M0 12.500 3.500 9 29 28l-2 8Z" /><path fill="#2ba8f2" d="m26.500 0 9.500 4v28l-9.500 4Z" /></svg>
        </TaskButton>
        <TaskButton>
          <svg viewBox="0 0 36 36" className="size-9"><path fill="#f77" d="m18 0 8 8.500-8 8.500-8-8.500Z" /><path fill="#8ed05f" d="m27.500 9.500 8.500 8.500-8.500 8.500-8.500-8.500Z" /><path fill="#7fb2ff" d="M8.500 9.500 17 18l-8.500 8.500L0 18Z" /><path fill="#ffe37a" d="m18 19 8 8.500-8 8.500-8-8.500Z" /><path stroke="#332d24" strokeWidth="2.500" fill="none" d="m13 6 5 5v15M18 12l6 6" /><g fill="#332d24"><circle cx="18" cy="11" r="2.800" /><circle cx="24" cy="18" r="2.800" /><circle cx="18" cy="26" r="2.800" /></g></svg>
        </TaskButton>
        <TaskButton on hot>
          <div className="relative size-9">
            <svg viewBox="0 0 36 36" className="size-9"><circle cx="18" cy="18" r="18" fill="#fbc116" /><path fill="#ea4335" d="M2.400 9A18 18 0 0 1 33.600 9L18 10.500l-8 11.500Z" /><path fill="#34a853" d="M2.400 9A18 18 0 0 0 17 36l8-14H10Z" /><circle cx="18" cy="18" r="8.500" fill="#fff" /><circle cx="18" cy="18" r="6.700" fill="#1a73e8" /></svg>
            <Face className="absolute top-[15px] left-[15px] size-6" />
          </div>
        </TaskButton>
        <TaskButton on>
          <svg viewBox="0 0 32 32" className="size-8"><path fill="#b98d3c" d="M27 3h5l-1 24-3 2Z" /><path fill="#e9eef0" d="m26 3 4 1-2 27-4-2Z" /><path fill="#6fb6c4" d="M9 2h18l-3 29L0 23Z" /><path fill="#bfe2e8" d="M9 2h12L8 25l-8-2Z" /><path stroke="#ccc" strokeWidth="3" strokeDasharray="1.500 1" d="M10 2h18" /></svg>
        </TaskButton>
      </div>
      <svg viewBox="0 0 36 34" className="ml-[121px] h-[34px] w-[36px] shrink-0">
        <defs><linearGradient id="sun"><stop offset="0" stopColor="#fbb63a" /><stop offset="1" stopColor="#f06f1e" /></linearGradient></defs>
        <circle cx="18" cy="18" r="15" fill="url(#sun)" />
        <path fill="#b5cdf5" d="M4 14a4 4 0 0 1 0-7.500C5-1 14-1 15 5c5 0 6 7 2 9Z" />
        <path fill="#b5cdf5" d="M19 33a4.500 4.500 0 0 1 0-9c1-7 10-6 11-1 6 0 7 9 2 10Z" />
      </svg>
      <Fit w={42} className="mt-[2px] ml-[13px] text-[21px]">35°C</Fit>
      <Fit w={111} className="mt-[2px] ml-[14px] text-[21px]">Partly sunny</Fit>
      <Stroke className="ml-[38px] h-[11px] w-[18px]" w={1.600} box="0 0 18 11"><path d="m1 10 8-8.500L17 10" /></Stroke>
      <Stroke className="ml-5 h-[22px] w-[17px]" w={1.400} box="0 0 17 22"><rect x="1" y="5" width="10" height="12" rx="1.500" /><path d="m11 9.500 4-2.500v8l-4-2.500M2.500 2c3-1.500 8-1.500 11 0M2.500 20c3 1.500 8 1.500 11 0" /></Stroke>
      <svg viewBox="0 0 25 18" className="ml-[14px] h-[18px] w-[25px] shrink-0"><path fill="#fff" d="M8 6h14v11H6v-5l2-2ZM23 9h1.500v5H23z" /><path fill="none" stroke="#fff" strokeWidth="1.200" d="M2 0v4M6 0v4M.8 4h6.400v3c0 3-6.400 3-6.400 0ZM4 9v6h2M7.500 5H23v12.500H4.500" /></svg>
      <Stroke className="ml-[15px] h-[19px] w-[20px]" w={1.400} box="0 0 20 19"><path d="M1 18C1 8 8 1 18 1M6 18C6 11 11 6 18 6M11 18c0-4 3-7 7-7" /><circle cx="17" cy="16.500" r="1.500" fill="currentColor" stroke="none" /></Stroke>
      <Stroke className="ml-[13px] h-[20px] w-[23px]" w={1.400} box="0 0 23 20"><path d="M1 7h3l6-6v18l-6-6H1ZM13 8q1.500 2 0 4M16 5q3.500 5 0 10M19 2.500q5 7.500 0 15" /></Stroke>
      <div className="ml-[16px] flex w-[94px] shrink-0 flex-col items-center text-[17px] leading-[28px]">
        <Fit w={42}>14:57</Fit>
        <Fit w={92}>10-09-2024</Fit>
      </div>
      <Stroke className="ml-[28px] size-6" w={1.500} box="0 0 24 24"><path d="M1 1h22v17.500h-7.500L12 22l-3.500-3.500H1Z" /></Stroke>
      <span className="ml-[30px] h-[60px] w-[2px] bg-[#85807d]" />
    </div>
  );
}

export default function App() {
  return (
    <div className="h-[1530px] w-[3362px] overflow-hidden bg-white font-['Noto_Sans','Open_Sans',sans-serif]">
      <div className="relative flex h-[1080px] w-[1920px] flex-col overflow-hidden">
        <div className="font-['Open_Sans','Noto_Sans',sans-serif]">
          <TabStrip />
          <Toolbar />
        </div>
        <ConsoleHeader />
        <div className="flex h-[773px] shrink-0 overflow-hidden bg-white">
          <Sidebar />
          <div className="flex w-[1433px] shrink-0 flex-col justify-between overflow-hidden border-x border-[#aab7b8] bg-[#f2f3f3]">
            <VolumesTable />
            <SplitPanel />
          </div>
          <RightRail />
        </div>
        <Footer />
        <div className="font-['Open_Sans','Noto_Sans',sans-serif]">
          <Taskbar />
        </div>
        <div className="absolute top-[855px] left-[1853px] flex size-[60px] items-center justify-center rounded-full border border-[#ececec] bg-[#f8f8f8] shadow-[0_4px_18px_#0003]">
          <Stroke className="size-[30px] text-[#2b2b2b]" w={2} box="0 0 30 30">
            <rect x="1" y="1" width="18" height="18" rx="4" />
            <path d="m6 14.500 4-9.500 4 9.500M7.500 11.500h5M22 12h3c2 0 4 2 4 4v9c0 2-2 4-4 4h-9c-2 0-4-2-4-3.500M18 25c4-1 6-4 7-8M18 20h7M20 22l4 3" />
          </Stroke>
        </div>
        <div className="absolute top-[930px] left-[1841px] flex h-[74px] w-[79px] items-center rounded-l-full bg-[#f8f8f8] pl-[23px] shadow-[0_2px_14px_#0003]">
          <Brain id="b3" className="size-10" />
        </div>
      </div>
    </div>
  );
}
